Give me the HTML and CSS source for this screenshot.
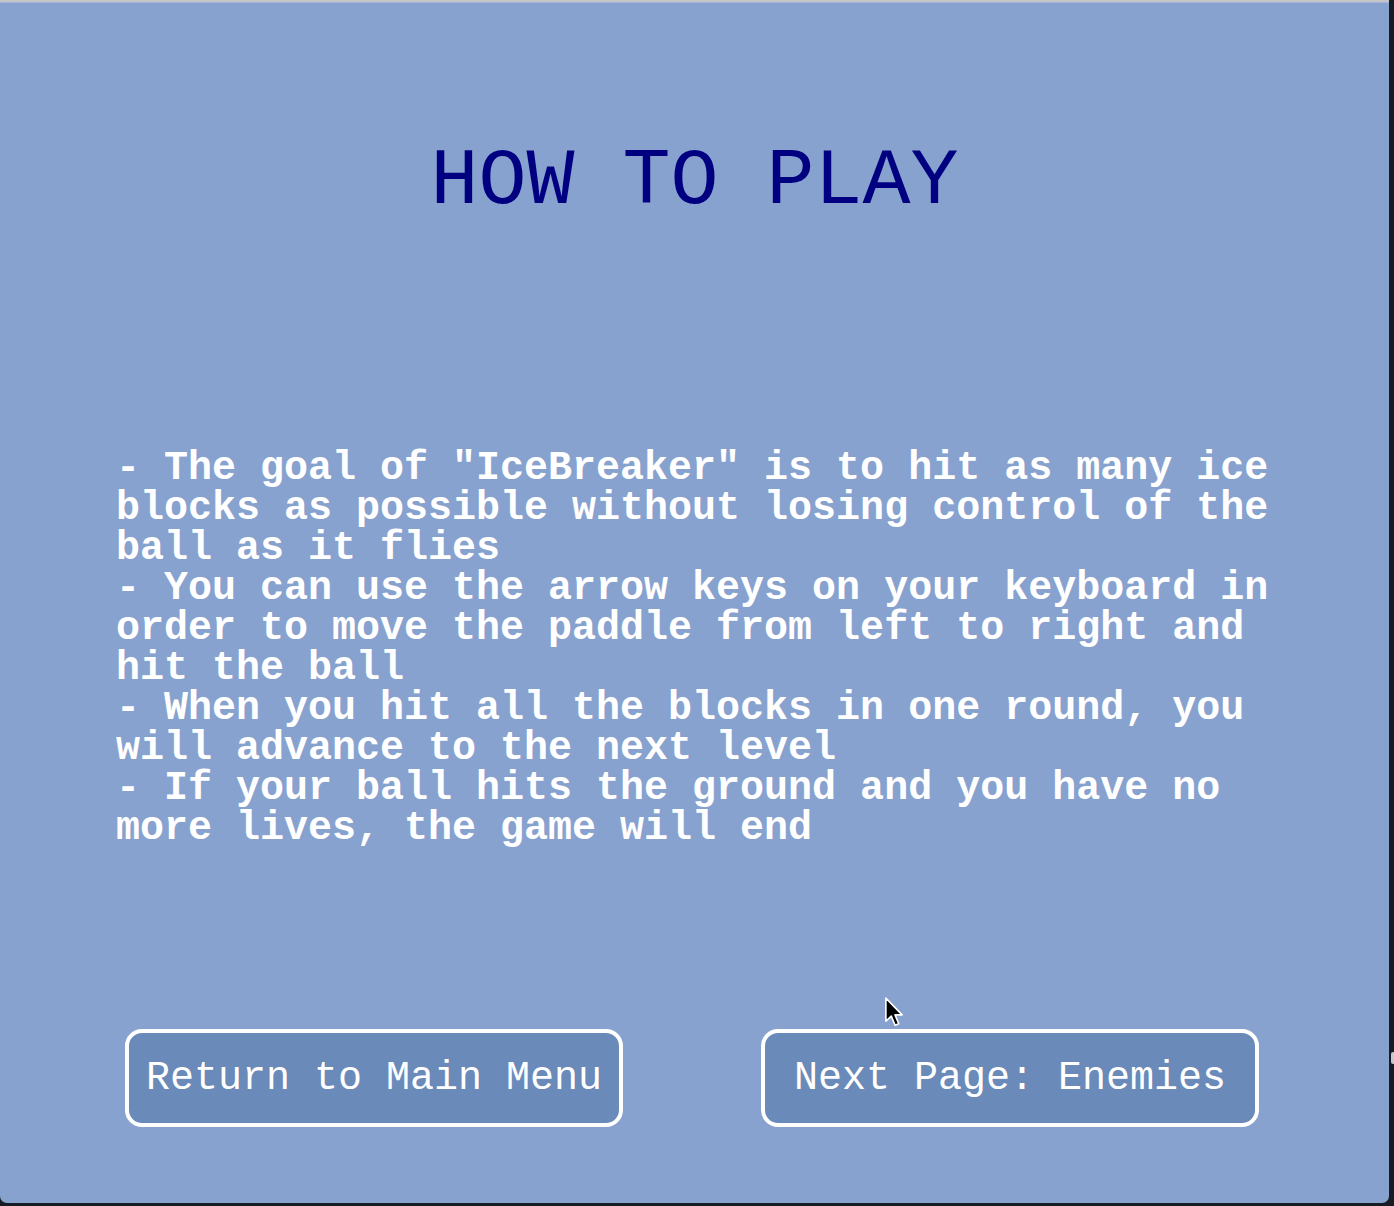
FILE: index.html
```html
<!DOCTYPE html>
<html lang="en">
<head>
<meta charset="utf-8">
<title>How to Play</title>
<link rel="stylesheet" href="styles.css">
</head>
<body>
<div class="screen">
  <div class="topbar"></div>
  <main class="window">
    <h1 class="title">HOW TO PLAY</h1>
    <div class="rules">
      <div>- The goal of "IceBreaker" is to hit as many ice blocks as possible without losing control of the ball as it flies</div>
      <div>- You can use the arrow keys on your keyboard in order to move the paddle from left to right and hit the ball</div>
      <div>- When you hit all the blocks in one round, you will advance to the next level</div>
      <div>- If your ball hits the ground and you have no more lives, the game will end</div>
    </div>
    <div class="actions">
      <button class="btn">Return to Main Menu</button>
      <button class="btn">Next Page: Enemies</button>
    </div>
    <svg class="cursor" width="20" height="33" viewBox="0 0 16 26">
      <path d="M1.5 1.5 L1.5 20 L5.8 15.9 L8.9 23.2 L11.8 22 L8.8 14.9 L14.5 14.9 Z" fill="#000" stroke="#fff" stroke-width="1.3" stroke-linejoin="round"/>
    </svg>
  </main>
  <div class="knob"></div>
</div>
</body>
</html>
```

FILE: styles.css
```css
html, body {
  margin: 0;
  padding: 0;
}

body {
  background: #161b25;
  width: 1394px;
  height: 1206px;
  overflow: hidden;
}

.screen {
  position: relative;
  width: 1389px;
  height: 1203px;
  display: flex;
  flex-direction: column;
}

.topbar {
  height: 3px;
  background: #c5c5c7;
  border-bottom: 1px solid #9fb3d6;
  box-sizing: border-box;
}

.window {
  position: relative;
  flex: 1;
  background: #88a2cf;
  border-radius: 0 0 7px 7px;
  display: flex;
  flex-direction: column;
  font-family: "Liberation Mono", "Courier New", monospace;
}

.title {
  margin: 139px 0 0;
  font-size: 80px;
  line-height: 80px;
  font-weight: normal;
  color: #000080;
  text-align: center;
  letter-spacing: 0;
}

.rules {
  margin: 227px 116px 0;
  font-size: 40px;
  line-height: 40px;
  font-weight: bold;
  color: #ffffff;
}

.actions {
  display: flex;
  gap: 138px;
  margin: 180px 0 0 125px;
}

.btn {
  box-sizing: border-box;
  width: 498px;
  height: 98px;
  padding: 0;
  border: 4px solid #ffffff;
  border-radius: 17px;
  background: #6a8ab9;
  color: #ffffff;
  font-family: "Liberation Mono", "Courier New", monospace;
  font-size: 40px;
  font-weight: normal;
  display: flex;
  align-items: center;
  justify-content: center;
}

.cursor {
  position: absolute;
  left: 884px;
  top: 993px;
}

.knob {
  position: absolute;
  left: 1391px;
  top: 1052px;
  width: 4px;
  height: 12px;
  border-radius: 3px;
  background: #c8c8c8;
}
```
